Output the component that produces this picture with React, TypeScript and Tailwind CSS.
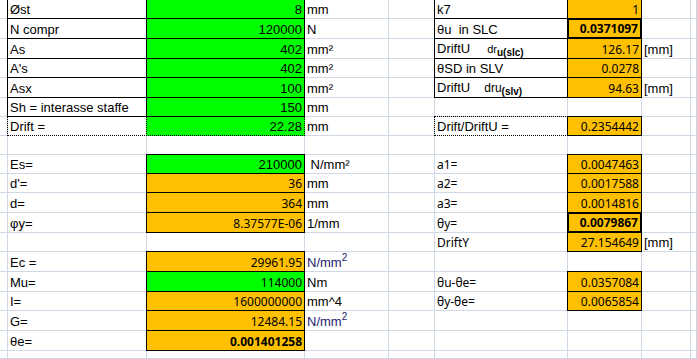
import React from 'react';

const ARIAL = "font-['Liberation_Sans',Arial,sans-serif] text-[13px]";
const TAHOMA = "font-['Noto_Sans',Tahoma,sans-serif] text-[12px]";

type Cell = {
  t?: React.ReactNode;
  bg?: 'green' | 'orange';
  frame?: 'solid' | 'thick' | 'dotted' | 'dottedTop';
  right?: boolean;
  tahoma?: boolean;
  bold?: boolean;
};

type Row = Partial<Record<'A' | 'B' | 'C' | 'D' | 'E' | 'F' | 'G' | 'H' | 'I', Cell>>;

const COLS = ['A', 'B', 'C', 'D', 'E', 'F', 'G', 'H', 'I'] as const;

const sq = (
  <span className="text-[#1c1c6c]">
    N/mm<sup className="text-[10px] -top-[6px]">2</sup>
  </span>
);

// left block helpers
const inp = (t: string, tahoma = false): Cell => ({ t, bg: 'green', frame: 'solid', right: true, tahoma });
const calc = (t: string, bold = false): Cell => ({ t, bg: 'orange', frame: 'solid', right: true, tahoma: true, bold });
const lbl = (t: React.ReactNode, framed = false): Cell => ({ t, frame: framed ? 'solid' : undefined });

const rows: Row[] = [
  { B: lbl('Øst', true), C: inp('8'), D: lbl('mm'), F: lbl('k7', true), G: calc('1') },
  {
    B: lbl('N compr', true),
    C: inp('120000'),
    D: lbl('N'),
    F: lbl('θu  in SLC', true),
    G: { t: '0.0371097', bg: 'orange', frame: 'thick', right: true, tahoma: true, bold: true },
  },
  {
    B: lbl('As', true),
    C: inp('402'),
    D: lbl('mm²'),
    F: lbl(
      <span>
        DriftU
        <span className="ml-[17px] text-[11px]">dr</span>
        <sub className="text-[10px] font-bold">u(slc)</sub>
      </span>,
      true
    ),
    G: calc('126.17'),
    H: lbl('[mm]'),
  },
  { B: lbl("A's", true), C: inp('402'), D: lbl('mm²'), F: lbl('θSD in SLV', true), G: calc('0.0278') },
  {
    B: lbl('Asx', true),
    C: inp('100'),
    D: lbl('mm²'),
    F: lbl(
      <span>
        DriftU
        <span className="ml-[14px] text-[12px]">dru</span>
        <sub className="text-[10px] font-bold">(slv)</sub>
      </span>,
      true
    ),
    G: calc('94.63'),
    H: lbl('[mm]'),
  },
  { B: lbl('Sh = interasse staffe', true), C: inp('150'), D: lbl('mm') },
  {
    B: { t: 'Drift =', frame: 'dotted' },
    C: { t: '22.28', bg: 'green', frame: 'dotted', right: true },
    D: lbl('mm'),
    F: { t: 'Drift/DriftU =', frame: 'dottedTop' },
    G: calc('0.2354442'),
  },
  {},
  { B: lbl('Es='), C: inp('210000'), D: lbl(' N/mm²'), F: { t: 'a1=', tahoma: true }, G: calc('0.0047463') },
  { B: lbl("d'="), C: calc('36'), D: lbl('mm'), F: { t: 'a2=', tahoma: true }, G: calc('0.0017588') },
  { B: lbl('d='), C: calc('364'), D: lbl('mm'), F: { t: 'a3=', tahoma: true }, G: calc('0.0014816') },
  {
    B: lbl('φy='),
    C: calc('8.37577E-06'),
    D: lbl('1/mm'),
    F: { t: 'θy=', tahoma: true },
    G: { t: '0.0079867', bg: 'orange', frame: 'thick', right: true, tahoma: true, bold: true },
  },
  { F: { t: 'DriftY', tahoma: true }, G: calc('27.154649'), H: lbl('[mm]') },
  { B: lbl('Ec ='), C: calc('29961.95'), D: lbl(sq) },
  { B: lbl('Mu='), C: inp('114000', true), D: lbl('Nm'), F: { t: 'θu-θe=', tahoma: true }, G: calc('0.0357084') },
  { B: lbl('I='), C: calc('1600000000'), D: lbl('mm^4'), F: { t: 'θy-θe=', tahoma: true }, G: calc('0.0065854') },
  { B: lbl('G='), C: calc('12484.15'), D: lbl(sq) },
  { B: lbl('θe='), C: calc('0.001401258', true) },
  {},
];

function frameClass(c?: Cell) {
  switch (c?.frame) {
    case 'solid':
      return '-mt-px -ml-px border border-black';
    case 'thick':
      return '-mt-px -ml-px border-2 border-black';
    case 'dotted':
      // top edge comes from the solid row above
      return '-ml-px border-l border-r border-b border-dotted border-black';
    case 'dottedTop':
      return '-mt-px -ml-px border border-dotted border-black';
    default:
      return 'border-r border-b border-[#d0d7e5]';
  }
}

function SheetCell({ c }: { c?: Cell }) {
  return (
    <div
      className={[
        'flex items-end whitespace-pre leading-[15px] pb-px px-[2px] min-w-0 text-black',
        c?.right ? 'justify-end' : 'justify-start',
        c?.tahoma ? TAHOMA : ARIAL,
        c?.bold ? 'font-bold' : '',
        c?.bg === 'green' ? 'bg-[#00ff00]' : c?.bg === 'orange' ? 'bg-[#ffc000]' : '',
        frameClass(c),
      ].join(' ')}
    >
      {c?.t}
    </div>
  );
}

export default function App() {
  return (
    <div className="w-[697px] h-[359px] overflow-hidden bg-white grid grid-cols-[8px_139px_158px_84px_46px_133px_74px_49px_1fr] grid-rows-[19px_20px_20px_19px_20px_19px_19px_19px_19px_19px_20px_20px_19px_20px_20px_19px_20px_20px_1fr]">
      {rows.map((row, i) =>
        COLS.map((col) => <SheetCell key={`${i}-${col}`} c={row[col]} />)
      )}
    </div>
  );
}
